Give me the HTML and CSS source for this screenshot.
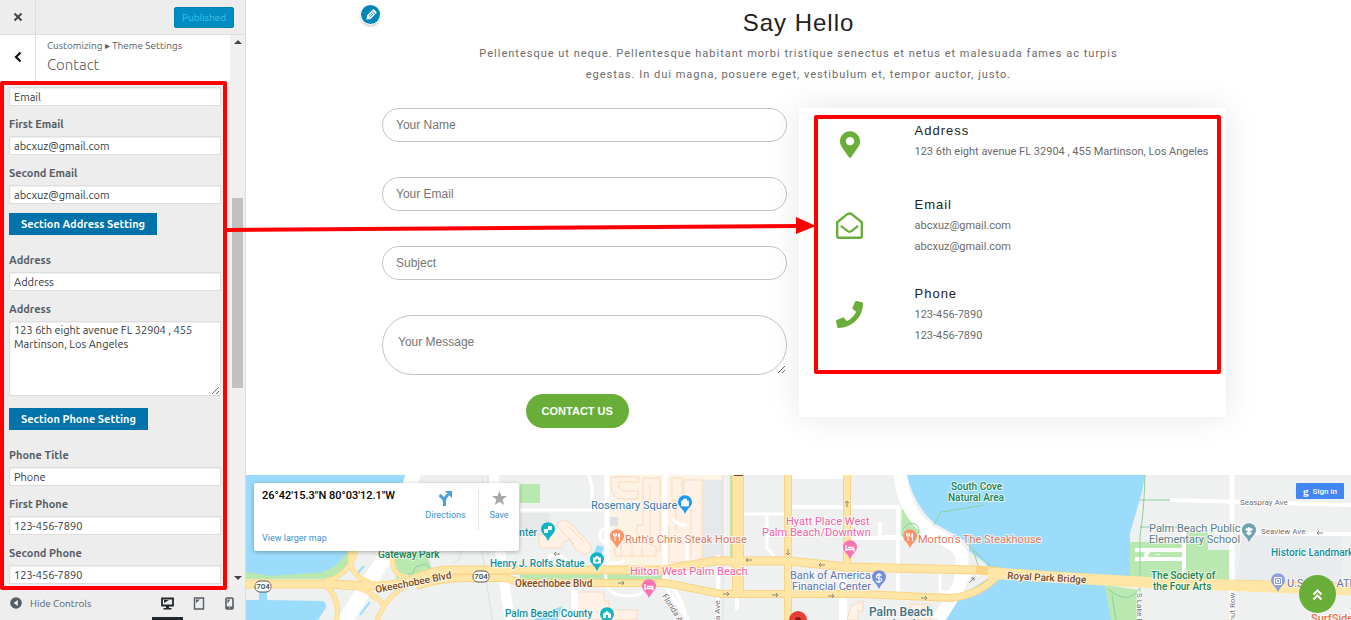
FILE: index.html
```html
<!DOCTYPE html>
<html lang="en">
<head>
  <meta charset="UTF-8">
  <meta name="viewport" content="width=device-width, initial-scale=1">
  <title>Customize: Contact</title>
  <link rel="stylesheet" href="styles.css">
</head>
<body>
  <aside class="sidebar">
    <header class="topbar">
      <button class="close" type="button" aria-label="Close"><svg width="10" height="10" viewBox="0 0 10 10"><path d="M1.5 1.5l7 7M8.5 1.5l-7 7" stroke="#444" stroke-width="2" fill="none"/></svg></button>
      <button class="published" type="button" disabled>Published</button>
    </header>
    <div class="pane">
      <div class="pane-content">
        <div class="section-title">
          <button class="back" type="button" aria-label="Back"><svg width="8" height="12" viewBox="0 0 8 12"><path d="M6.5 1.5L2 6l4.500 4.500" stroke="#111" stroke-width="2.200" fill="none"/></svg></button>
          <div class="titles">
            <span class="crumbs">Customizing ▸ Theme Settings</span>
            <h2>Contact</h2>
          </div>
        </div>
        <div class="controls">
          <div class="control"><input type="text" id="email-title" aria-label="Email Title" value="Email"></div>
          <div class="control"><label for="email-1">First Email</label><input type="text" id="email-1" value="abcxuz@gmail.com"></div>
          <div class="control"><label for="email-2">Second Email</label><input type="text" id="email-2" value="abcxuz@gmail.com"></div>
          <button class="section-btn" type="button">Section Address Setting</button>
          <div class="control"><label for="address-title">Address</label><input type="text" id="address-title" value="Address"></div>
          <div class="control"><label for="address-text">Address</label><textarea id="address-text">123 6th eight avenue FL 32904 , 455 Martinson, Los Angeles</textarea></div>
          <button class="section-btn" type="button">Section Phone Setting</button>
          <div class="control"><label for="phone-title">Phone Title</label><input type="text" id="phone-title" value="Phone"></div>
          <div class="control"><label for="phone-1">First Phone</label><input type="text" id="phone-1" value="123-456-7890"></div>
          <div class="control"><label for="phone-2">Second Phone</label><input type="text" id="phone-2" value="123-456-7890"></div>
        </div>
        <div class="mark mark-controls"></div>
      </div>
      <div class="scrollbar">
        <svg width="8" height="4" viewBox="0 0 8 4"><path d="M0 4L4 0l4 4z" fill="#444"/></svg>
        <div class="track"><div class="thumb"></div></div>
        <svg width="8" height="4" viewBox="0 0 8 4"><path d="M0 0l4 4 4-4z" fill="#444"/></svg>
      </div>
    </div>
    <footer class="footer">
      <button class="hide" type="button">
        <svg width="12" height="12" viewBox="0 0 12 12"><circle cx="6" cy="6" r="5.800" fill="#555d66"/><path d="M7.800 3v6L3.600 6z" fill="#eee"/></svg>
        Hide Controls
      </button>
      <div class="devices">
        <button class="active" type="button" aria-label="Desktop"><svg width="13" height="13" viewBox="0 0 13 13"><path d="M1 1.500h11v7H1z" fill="none" stroke="#23282d" stroke-width="1.800"/><path d="M3 3h5L3 6z" fill="#23282d"/><path d="M5 9h3v2h2.500v1.500h-8V11H5z" fill="#23282d"/></svg></button>
        <button type="button" aria-label="Tablet"><svg width="12" height="13" viewBox="0 0 12 13"><path d="M1.500 1h9v11h-9z" fill="none" stroke="#555d66" stroke-width="1.400"/><path d="M3 2.500h4L3 6z" fill="#555d66"/></svg></button>
        <button type="button" aria-label="Mobile"><svg width="9" height="13" viewBox="0 0 9 13"><rect x="1" y="1" width="7" height="11" rx="1" fill="none" stroke="#555d66" stroke-width="1.600"/><path d="M2.500 2.500h3l-3 4z" fill="#555d66"/><path d="M1 9.500h7V12H1z" fill="#555d66"/><path d="M4 10.500h1v1H4z" fill="#fff"/></svg></button>
      </div>
    </footer>
  </aside>

  <main class="preview">
    <button class="edit" type="button" aria-label="Edit section"><svg width="12" height="12" viewBox="0 0 12 12"><g transform="rotate(45 6 6)"><path d="M3.500.8Q3.500 0 4.300 0h3.400q.8 0 .8.800V9L6 12.500 3.500 9z" fill="#fff"/><path d="M3.500 2.300h5M5.200 3.500v5M6.800 3.500v5" stroke="#0085ba" stroke-width=".8"/></g></svg></button>
    <section class="contact">
      <h1>Say Hello</h1>
      <p class="intro">Pellentesque ut neque. Pellentesque habitant morbi tristique senectus et netus et malesuada fames ac turpis egestas. In dui magna, posuere eget, vestibulum et, tempor auctor, justo.</p>
      <div class="columns">
        <form class="contact-form">
          <input type="text" placeholder="Your Name" aria-label="Your Name">
          <input type="email" placeholder="Your Email" aria-label="Your Email">
          <input type="text" placeholder="Subject" aria-label="Subject">
          <textarea placeholder="Your Message" aria-label="Your Message"></textarea>
          <button type="button">CONTACT US</button>
        </form>
        <div class="card">
          <div class="info">
            <svg width="20" height="27" viewBox="0 0 384 512"><path fill="#6aae3a" d="M172.268 501.670C26.970 291.031 0 269.413 0 192 0 85.961 85.961 0 192 0s192 85.961 192 192c0 77.413-26.970 99.031-172.268 309.670-9.535 13.774-29.930 13.773-39.464 0zM192 272c44.183 0 80-35.817 80-80s-35.817-80-80-80-80 35.817-80 80 35.817 80 80 80z"/></svg>
            <div>
              <h3>Address</h3>
              <p>123 6th eight avenue FL 32904 , 455 Martinson, Los Angeles</p>
            </div>
          </div>
          <div class="info">
            <svg width="27" height="27" viewBox="0 0 27 27"><path d="M1.200 10.200L11 2.400q2.500-1.900 5 0l9.800 7.800V24q0 1.700-1.700 1.700H2.900q-1.700 0-1.700-1.700z" fill="none" stroke="#6aae3a" stroke-width="2.400" stroke-linejoin="round"/><path d="M5.500 14.300l5.800 4.600q2.200 1.700 4.400 0l5.800-4.600" fill="none" stroke="#6aae3a" stroke-width="2.200" stroke-linecap="round"/></svg>
            <div>
              <h3>Email</h3>
              <p>abcxuz@gmail.com</p>
              <p>abcxuz@gmail.com</p>
            </div>
          </div>
          <div class="info">
            <svg width="27" height="27" viewBox="0 0 512 512"><path fill="#6aae3a" d="M493.400 24.600l-104-24c-11.300-2.600-22.900 3.300-27.500 13.900l-48 112c-4.200 9.800-1.400 21.300 6.900 28l60.600 49.600c-36 76.700-98.900 140.500-177.200 177.200l-49.600-60.600c-6.800-8.300-18.200-11.100-28-6.900l-112 48C3.900 366.500-2 378.100.6 389.400l24 104C27.100 504.200 36.700 512 48 512c256.100 0 464-207.500 464-464 0-11.200-7.700-20.900-18.600-23.400z"/></svg>
            <div>
              <h3>Phone</h3>
              <p>123-456-7890</p>
              <p>123-456-7890</p>
            </div>
          </div>
          <div class="mark mark-card"></div>
        </div>
      </div>
    </section>

    <section class="map">
      <svg class="map-canvas" viewBox="0 0 1105 145" preserveAspectRatio="xMinYMin slice">
        <rect width="1105" height="145" fill="#eff1f1"/>
        <path d="M996 60h100v50H990z" fill="#e9ecee"/>
        <!-- parks -->
        <g fill="#b9e8b0">
          <path d="M0 0h164L150 50Q118 62 105 84T76 104H0z"/>
          <path d="M148 72h30l8 22-36 10z"/>
          <path d="M274 9h20v19h-20zM274 98h142v8H274zM484 0h6v82h-6z"/>
          <path d="M656 33l22 20-10 8h-13z"/>
          <path d="M884 67h57V57h21v18h21v35h-99zM859 110l34 5v30h-29z"/>
        </g>
        <!-- water -->
        <g fill="#9bdbfb">
          <path d="M0 0h159l-18 52Q108 62 99 80q-12 18-34 18l-40 3-25-4z"/>
          <path d="M13 116h8v9l56 1q6 4 1 10l-6 9H0v-20h13z"/>
          <path d="M661 0h238l-3 17-12 41v50l-25 3 6 34H690l25-25 34-20-10-12-16-12V68l-35-20Q668 30 661 0z"/>
          <path d="M351 70l7 2-4 12-10 4zM316 131l-4 14h-24q12-8 28-14z"/>
        </g>
        <path d="M110 100l8-9M114 140l10-13" stroke="#9bdbfb" stroke-width="2"/>
        <!-- built-up blocks -->
        <path d="M364 0h116v84q-40-2-62 8h-54z" fill="#fbf3e3"/>
        <path d="M457 5h20v80h-20z" fill="#e7e8e9"/>
        <path d="M274 38h30v24h-30z" fill="#e7e8e9"/>
        <path d="M364 42h8v9h-8z" fill="#dfe0e3"/>
        <g fill="#fff1e6" stroke="#fbd9bd" stroke-width="1">
          <path d="M365 2h28v5h-20q-3 10 12 9h7v8h-14q-13 0-13-14z"/>
          <path d="M397 3h17v73h-17v-8h-6V50h6z"/>
          <path d="M426 3h10v22h-10zM424 27h14v-22h18v82h-33V52h-5V30h6z"/>
          <path d="M369 68h33l8 4v9h-41z"/>
          <path d="M293 60h8l3-9h7q2-7 10-5l5 4 17 18q5 7-2 11-6 1-12-6l-5-9-8 4v5h-15q-8 2-8-5z"/>
          <path d="M331 117h27v9h5v19h-31zM363 135h28v10h-28z"/>
          <path d="M605 131l12-5v10h-5v9h-11zM664 129h20v16h-18z"/>
        </g>
        <path d="M310 50l18 19M321 50l18 18M430 30v25M404 10v60M445 33v50M375 71v10M386 71v10M396 71v10" stroke="#fbd9bd" fill="none"/>
        <!-- local streets -->
        <g fill="none" stroke="#fff" stroke-linejoin="round">
          <path d="M168-3l-18 61-12 26-42 66" stroke-width="15"/>
          <path d="M248 0q2 60 16 145" stroke-width="10"/>
          <path d="M361 0v93M419 0v110" stroke-width="5"/>
          <path d="M274 35h87M343 0l3 12v23M360 53q-7 2-6 8t6 7M360 93q-2 22 10 26 14 4 24 0l8-9M303 88v-7q10-3 15 3l5 3M441 50q-10 0-14-6M441 63v22M364 88h10l4-3" stroke-width="3"/>
          <path d="M472 80v65M426 112q12 15 14 33M421 114l21 31M491 123v12M327 115v30M330 115v30" stroke-width="4"/>
          <path d="M496 39h46M521 39v34l7 8" stroke-width="3"/>
          <path d="M544 32h110M544 2h54M600 63h70M652 30v92M634 47v15h16" stroke-width="4"/>
          <path d="M597 97v48" stroke-width="8"/>
          <path d="M654-3q3 43 34 62 27 12 28 24v15q-2 14-8 22l-16 25" stroke-width="13"/>
          <path d="M680 95q10-6 14 2v20h16M673 63l10-9" stroke-width="3"/>
          <path d="M706 120l22-25 6 5" stroke-width="5"/>
          <path d="M986 0v145" stroke-width="5"/>
          <path d="M924 25l181 5M889 75h48M889 84h49M938 57v42M893 115v30M989 57l48 2h68" stroke-width="4"/>
          <path d="M903 76q-6 4 0 8M912 79v1" stroke-width="4"/>
        </g>
        <path d="M236 0v76l10 69M242 0v80M477 0v145M213 75q6 8-6 13" stroke="#dcdee0" fill="none"/>
        <!-- footpaths -->
        <path d="M899 0q-1 38-5 60v60M894 25h30M894 52h50M862 114q20 17 31 0M866 120l4 25M688 50l7-13 44-7M720 68l30 28M727 75l6 18M722 118l26-18M184 95q-3-8-8-5-8 0-9 8l-12 4M657 54q6-8 12-5t3 11" stroke="#8cd0a0" stroke-width="1" fill="none"/>
        <!-- main roads -->
        <g fill="none" stroke="#fbd384">
          <path d="M0 109h80l50 2q20 0 38-7 20-10 42-9l64 0h144l50-9h76l56 6 130 3q20 1 30 3l80 5 70 4 213 6" stroke-width="9"/>
          <path d="M80 106q22-5 30-30M105 76q-5 24 20 32M78 109q18 14 12 40M95 113q22-5 36 12M131 145q10-25 30-34M128 120l10 10M147 76q-4 25 15 26" stroke-width="5"/>
          <path d="M170 111q23-8 50-8h40l15 5h145l55 11h140l90 4q30-3 50-26" stroke-width="8"/>
          <path d="M492 0v120" stroke-width="12"/>
          <path d="M542 0v145M601 0v92" stroke-width="8"/>
        </g>
        <g fill="none" stroke="#ffe6a6">
          <path d="M0 109h80l50 2q20 0 38-7 20-10 42-9l64 0h144l50-9h76l56 6 130 3" stroke-width="7"/>
          <path d="M742 98l80 5 70 4 213 8" stroke-width="11"/>
          <path d="M80 106q22-5 30-30M105 76q-5 24 20 32M78 109q18 14 12 40M95 113q22-5 36 12M131 145q10-25 30-34M128 120l10 10M147 76q-4 25 15 26" stroke-width="4"/>
          <path d="M170 111q23-8 50-8h40l15 5h145l55 11h140l90 4q30-3 50-26" stroke-width="6"/>
          <path d="M492 0v120" stroke-width="10"/>
          <path d="M542 0v145M601 0v92" stroke-width="6"/>
        </g>
        <path d="M488 0h9" stroke="#6b4030" stroke-width="2"/>
        <!-- one-way arrows -->
        <g fill="none" stroke="#8a8674" stroke-width="1">
          <path d="M372 108h6m-2-2l2 2-2 2M477 119h6m-2-2l2 2-2 2M526 120h6m-2-2l2 2-2 2M582 121h6m-2-2l2 2-2 2M675 123h6m-2-2l2 2-2 2"/>
          <path d="M506 85h-6m2-2l-2 2 2 2M579 90h-6m2-2l-2 2 2 2M314 79h-6m2-2l-2 2 2 2M1077 58h-6m2-2l-2 2 2 2"/>
          <path d="M601 32v-6m-2 2l2-2 2 2M542 74v6m-2-2l2 2 2-2M723 108l5-5m-3 0h3v3"/>
        </g>
        <!-- place pins -->
        <defs>
          <path id="pin" d="M0 11Q-1.500 7-4.500 4.500A7 7 0 1 1 4.500 4.500Q1.500 7 0 11z"/>
        </defs>
        <g>
          <use href="#pin" x="439" y="28" fill="#1a9bee"/><path d="M435.500 26h7v5h-7zM437.500 26v-2h3v2" fill="#fff" stroke="#fff" stroke-width=".8"/>
          <use href="#pin" x="302" y="55" fill="#12b5c4"/><path d="M298 54h4v4h-4zM302 51h4v4h-4z" fill="#fff"/>
          <use href="#pin" x="371" y="62" fill="#ff9168"/><path d="M369 58v8M367.500 58v3h3v-3M373.500 66v-8q-1.500 1-1 4h1" fill="none" stroke="#fff"/>
          <use href="#pin" x="351" y="85" fill="#12b5c4"/><path d="M347 82.500h2l1-1.500h2l1 1.500h2v6h-8z" fill="#fff"/><circle cx="351" cy="85.500" r="1.600" fill="#12b5c4"/>
          <use href="#pin" x="403" y="112" fill="#f973b4"/><path d="M399 109v6M399 113.500h8v2M401 111.500h5.500v2" fill="none" stroke="#fff" stroke-width="1.400"/>
          <use href="#pin" x="361" y="140" fill="#12b5c4"/><path d="M357 143v-4l4-3 4 3v4z" fill="#fff"/><path d="M360 143v-3h2v3z" fill="#12b5c4"/>
          <use href="#pin" x="604" y="73" fill="#f973b4"/><path d="M600 70v6M600 74.500h8v2M602 72.500h5.500v2" fill="none" stroke="#fff" stroke-width="1.400"/>
          <use href="#pin" x="664" y="62" fill="#ff9168"/><path d="M662 58v8M660.500 58v3h3v-3M666.500 66v-8q-1.500 1-1 4h1" fill="none" stroke="#fff"/>
          <use href="#pin" x="633" y="103" fill="#7590dc"/><path d="M635.500 100.500q-2.500-2-4.500 0t2 2.500 2 3-5 0M633 98v10" fill="none" stroke="#fff" stroke-width="1.200"/>
          <use href="#pin" x="1003" y="56" fill="#6da1ad"/><path d="M998.500 54.500l4.500-2.500 4.500 2.500-4.500 2.500zM1000.500 57v2l2.500 1.500 2.500-1.500v-2" fill="#fff"/>
          <use href="#pin" x="1032" y="106" fill="#8b9fe0"/><path d="M1028.500 102.500h7v7h-7zM1030.500 104.500h3v3h-3z" fill="none" stroke="#fff"/>
          <circle cx="552" cy="145" r="9" fill="#ea3f37"/><circle cx="552" cy="145" r="3" fill="#8c1d18"/>
        </g>
        <g fill="#fff" stroke="#555"><rect x="9" y="106" width="16" height="11" rx="5"/><rect x="227" y="96" width="16" height="11" rx="5"/></g>
        <!-- place names -->
        <g class="names">
          <text class="road-no" x="17" y="114">704</text>
          <text class="road-no" x="235" y="104">704</text>
          <text class="green" x="132" y="83">Gateway Park</text>
          <text class="brown" x="130" y="118" transform="rotate(-11 130 118)">Okeechobee Blvd</text>
          <text class="brown" x="269" y="112">Okeechobee Blvd</text>
          <text class="teal" x="244" y="92">Henry J. Rolfs Statue</text>
          <text class="teal" x="259" y="142">Palm Beach County</text>
          <text class="teal" x="268" y="61">enter</text>
          <text class="blue" x="345" y="34">Rosemary Square</text>
          <text class="orange" x="379" y="68">Ruth's Chris Steak House</text>
          <text class="pink" x="384" y="100">Hilton West Palm Beach</text>
          <text class="pink" x="540" y="50">Hyatt Place West</text>
          <text class="pink" x="516" y="61">Palm Beach/Downtwn</text>
          <text class="orange" x="672" y="68">Morton's The Steakhouse</text>
          <text class="indigo" x="544" y="104">Bank of America</text>
          <text class="indigo" x="546" y="115">Financial Center</text>
          <text class="town" x="623" y="141">Palm Beach</text>
          <text class="town" x="637" y="154">Island</text>
          <text class="green" x="705" y="15">South Cove</text>
          <text class="green" x="702" y="26">Natural Area</text>
          <text class="brown" x="761" y="104" transform="rotate(3 761 104)">Royal Park Bridge</text>
          <text class="slate" x="903" y="57">Palm Beach Public</text>
          <text class="slate" x="903" y="68">Elementary School</text>
          <text class="green" x="905" y="104">The Society of</text>
          <text class="green" x="907" y="115">the Four Arts</text>
          <text class="teal" x="1025" y="81">Historic Landmark</text>
          <text class="indigo" x="1041" y="112">U.S. Bank ATM</text>
          <text class="surf" x="1065" y="147">SurfSide</text>
          <text class="street" x="994" y="30">Seaspray Ave</text>
          <text class="street" x="1015" y="59">Seaview Ave</text>
          <text class="street" x="416" y="121" transform="rotate(58 416 121)">Florida Ave</text>
          <text class="street" x="474" y="152" transform="rotate(-90 474 152)">ma Ave</text>
          <text class="street" x="891" y="118" transform="rotate(90 891 118)">S Lake Dr</text>
          <text class="street" x="989" y="165" transform="rotate(-90 989 165)">Coconut Row</text>
        </g>
      </svg>
      <div class="place-card">
        <div class="place">
          <strong>26°42'15.3"N 80°03'12.1"W</strong>
          <a href="#">View larger map</a>
        </div>
        <a class="action" href="#"><svg width="15" height="16" viewBox="0 0 15 16"><path d="M6.500 16v-4Q6.500 9 1.500 5M6.500 12q0-5 4-7.500" fill="none" stroke="#4a9fe0" stroke-width="3"/><path d="M7 1h7v7z" fill="#4a9fe0"/></svg>Directions</a>
        <a class="action save" href="#"><svg width="15" height="16" viewBox="0 0 15 16"><path d="M7.500 1l1.900 5H15l-4.400 3.500 1.600 5.500-4.700-3.300L2.800 15l1.600-5.500L0 6h5.600z" fill="#a8a8a8"/></svg>Save</a>
      </div>
      <button class="sign-in" type="button"><span class="g">g</span>Sign in</button>
      <a class="to-top" href="#" aria-label="Back to top"><svg width="11" height="13" viewBox="0 0 11 13"><path d="M1.500 6.500l4-4 4 4M1.500 11.500l4-4 4 4" fill="none" stroke="#fff" stroke-width="2"/></svg></a>
    </section>

    <svg class="arrow" viewBox="0 0 590 20"><path d="M0 15L572 11" stroke="#f00" stroke-width="4"/><path d="M569 2l20 9-20 8z" fill="#f00"/></svg>
  </main>
</body>
</html>
```
FILE: styles.css
```css
* { box-sizing: border-box; }
body { margin: 0; display: flex; height: 100vh; overflow: hidden; background: #fff; font-family: Roboto, sans-serif; }
h1, h2, h3, p { margin: 0; font-weight: normal; }
button { padding: 0; border: 0; background: none; font: inherit; cursor: pointer; }
a { text-decoration: none; }
svg { display: block; }

/* customizer sidebar */
.sidebar { flex: 0 0 246px; display: flex; flex-direction: column; background: #ededed; border-right: 1px solid #ddd; font-family: Ubuntu, "Open Sans", sans-serif; font-size: 10px; color: #555d66; }
.topbar { display: flex; justify-content: space-between; align-items: center; height: 35px; padding-right: 11px; border-bottom: 1px solid #ddd; }
.close { display: flex; align-items: center; justify-content: center; width: 36px; height: 100%; border-right: 1px solid #ddd; }
.published { width: 60px; height: 21px; background: #008ec2; border: 1px solid #0080b0; border-radius: 2px; color: #45c0e6; }
.pane { flex: 1; display: flex; min-height: 0; }
.pane-content { position: relative; flex: 1; display: flex; flex-direction: column; min-width: 0; }
.section-title { display: flex; height: 49px; background: #fff; flex-shrink: 0; }
.back { display: flex; align-items: center; justify-content: center; width: 36px; padding-bottom: 6px; border-right: 1px solid #ddd; }
.titles { padding: 3px 0 0 11px; }
.crumbs { display: block; line-height: 16px; }
.titles h2 { font-size: 15px; font-weight: 300; line-height: 22px; }
.controls { flex: 1; display: flex; flex-direction: column; gap: 10px; padding: 3px 9px 0; overflow: hidden; font-size: 11px; }
.control { display: flex; flex-direction: column; gap: 3px; }
.control label { font-weight: 600; line-height: 17px; }
.control input, .control textarea { width: 100%; border: 1px solid #ddd; background: #fff; box-shadow: inset 0 1px 2px rgba(0,0,0,.07); font: inherit; color: #32373c; }
.control input { height: 19px; padding: 0 4px; }
.control textarea { height: 75px; margin-bottom: 3px; padding: 1px 4px; line-height: 14px; }
.section-btn { align-self: flex-start; flex-shrink: 0; height: 22px; margin: -1px 0 7px; padding: 0 12px; background: #0073aa; color: #fff; font-weight: 600; }
.scrollbar { display: flex; flex-direction: column; align-items: center; width: 15px; padding: 5px 0 6px; background: #f0f0f0; }
.track { flex: 1; width: 11px; padding-top: 154px; }
.thumb { height: 190px; background: #c1c1c1; }
.footer { display: flex; justify-content: space-between; height: 34px; padding: 0 0 0 10px; background: #eee; }
.hide { display: flex; align-items: center; gap: 8px; color: #555d66; }
.devices { display: flex; }
.devices button { display: flex; align-items: center; justify-content: center; width: 31px; padding-top: 4px; border-bottom: 3px solid transparent; }
.devices .active { border-color: #23282d; }

/* red annotation frames */
.mark { position: absolute; border: 4px solid #f00; border-radius: 2px; pointer-events: none; }
.mark-controls { top: 46px; right: 3px; bottom: -4px; left: 0; }
.mark-card { top: 7px; right: 5px; bottom: 43px; left: 15px; }
.arrow { position: absolute; top: 215px; left: -19px; width: 590px; }

/* page preview */
.preview { position: relative; flex: 1; min-width: 0; display: flex; flex-direction: column; }
.edit { position: absolute; top: 5px; left: 115px; display: flex; align-items: center; justify-content: center; width: 19px; height: 19px; border-radius: 50%; background: #0085ba; box-shadow: 0 0 0 1px #fff, 0 2px 3px rgba(0,0,0,.3); }
.contact { width: 100%; max-width: 855px; margin: 0 auto; padding: 5px 0 47px; color: #6b6b6b; font-size: 11px; line-height: 21px; }
.contact h1 { color: #222; font: 24px/36px "Liberation Sans", sans-serif; letter-spacing: 1px; text-align: center; }
.intro { max-width: 660px; margin: 2px auto 23px; letter-spacing: 1px; text-align: center; }
.columns { display: grid; grid-template-columns: 1fr 1fr; align-items: start; }
.contact-form { display: flex; flex-direction: column; gap: 35px; padding: 0 12px 0 11px; }
.contact-form input, .contact-form textarea { width: 100%; border: 1px solid #c4c4c4; border-radius: 30px; background: transparent; font: 12px "Liberation Sans", sans-serif; }
.contact-form input { height: 34px; padding: 0 13px; }
.contact-form textarea { height: 60px; padding: 19px 15px; }
.contact-form ::placeholder { color: #757575; }
.contact-form button { align-self: center; width: 103px; height: 34px; margin: -16px 14px 0 0; border-radius: 17px; background: #6aae3a; color: #fff; font: bold 11px "Liberation Sans", sans-serif; }
.card { position: relative; display: flex; flex-direction: column; gap: 26px; height: 309px; padding-top: 12px; background: #fff; box-shadow: 0 0 30px rgba(0,0,0,.1); }
.info { display: grid; grid-template-columns: 102px 1fr; column-gap: 14px; align-items: center; min-height: 48px; }
.info > svg { justify-self: center; }
.info > div { align-self: start; }
.info h3 { color: #222; font-family: "Liberation Sans", sans-serif; font-size: 13px; letter-spacing: 1px; }
.info p { white-space: nowrap; }

/* map embed */
.map { position: relative; flex: 1; min-height: 145px; overflow: hidden; }
.map-canvas { width: 100%; height: 100%; }
.names text { font-size: 11px; font-weight: 500; stroke: #fff; stroke-width: 2px; stroke-opacity: .7; paint-order: stroke; }
.names .road-no { fill: #444; font-size: 8px; text-anchor: middle; }
.names .green { fill: #188552; font-size: 10px; }
.names .brown { fill: #7d4a25; font-size: 10px; }
.names .teal { fill: #0f8f9c; font-size: 10px; }
.names .blue { fill: #3579b5; font-weight: 400; }
.names .orange { fill: #dd7c5c; font-weight: 400; }
.names .pink { fill: #f562ab; font-weight: 400; }
.names .indigo { fill: #6273b0; font-weight: 400; }
.names .slate { fill: #5e7d87; font-weight: 400; }
.names .town { fill: #3d7287; font-size: 12px; }
.names .surf { fill: #e8714f; }
.names .street { fill: #707070; font-size: 8px; font-weight: 400; }
.place-card { position: absolute; top: 8px; left: 8px; display: flex; width: 265px; height: 68px; padding: 7px 0 7px 8px; border-radius: 2px; background: #fff; box-shadow: 0 1px 4px rgba(0,0,0,.3); font-size: 9px; }
.place-card a { color: #3a8fd0; }
.place { flex: 1; display: flex; flex-direction: column; justify-content: space-between; line-height: 12px; }
.place strong { color: #000; font-size: 11px; font-weight: 500; white-space: nowrap; }
.action { display: flex; flex-direction: column; align-items: center; gap: 3px; width: 66px; height: 40px; border-right: 1px solid #e4e4e4; line-height: 12px; }
.action.save { width: 40px; border: 0; }
.sign-in { position: absolute; top: 8px; right: 7px; display: flex; align-items: center; justify-content: center; gap: 4px; width: 48px; height: 16px; border-radius: 1px; background: #4285f4; color: #fff; font-size: 8px; font-weight: 500; }
.g { font-family: "Liberation Serif", serif; font-size: 11px; font-weight: bold; }
.to-top { position: absolute; right: 15px; bottom: 7px; display: flex; align-items: center; justify-content: center; width: 37px; height: 38px; border-radius: 50%; background: #6aae3a; }
```
